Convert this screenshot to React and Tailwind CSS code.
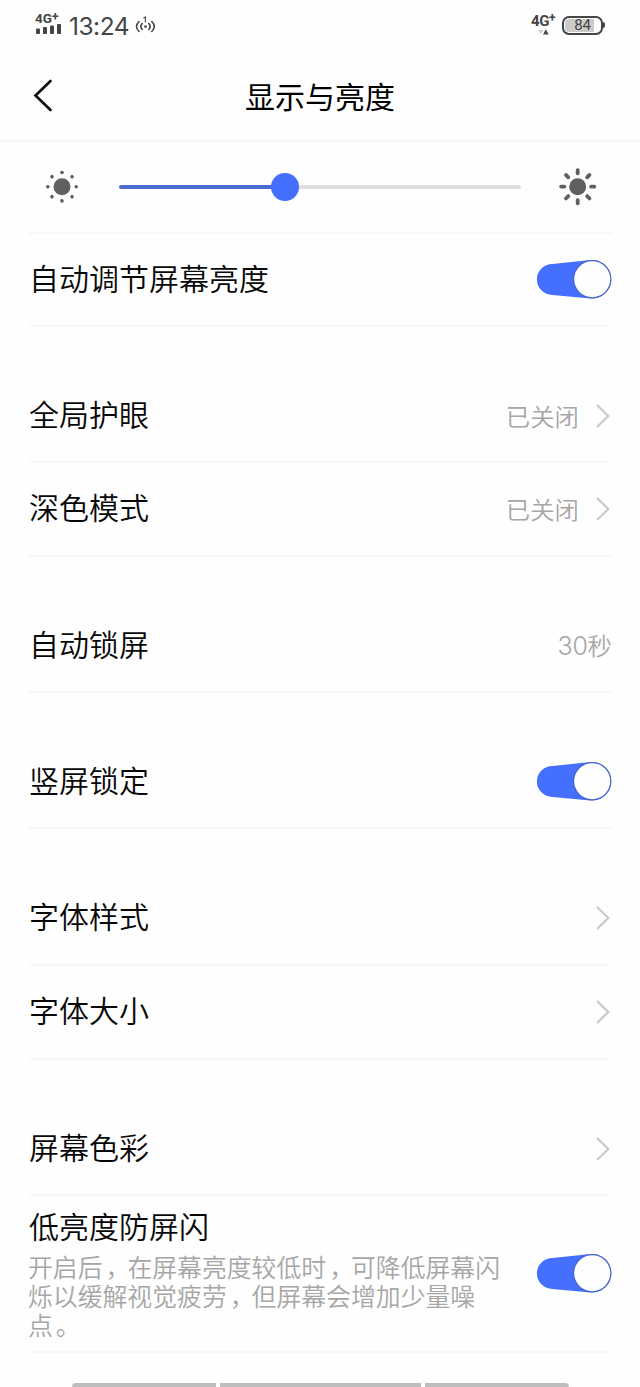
import React from "react";

function Toggle() {
  return (
    <button role="switch" aria-checked="true" className="block h-10 w-[76px] shrink-0">
      <svg viewBox="0 0 76 40" className="block h-10 w-[76px]">
        <path d="M16.4 3.9 L54.5 0 A19.3 19.3 0 1 1 54.5 38.5 L16.4 34.9 A15.5 15.5 0 0 1 16.4 3.9Z" fill="#456fff" />
        <circle cx="56.2" cy="19.2" r="18.7" fill="none" stroke="#4a66bd" strokeWidth="1.1" />
        <circle cx="56.2" cy="19.2" r="18" fill="#fefefe" />
      </svg>
    </button>
  );
}

function Chevron() {
  return (
    <svg viewBox="0 0 16 26" className="block h-[26px] w-4 shrink-0">
      <path d="M1 2 L12.3 13 L1 24" fill="none" stroke="#c9c9c9" strokeWidth="2.1" />
    </svg>
  );
}

function Row({ label, className, children }) {
  return (
    <div className={"mx-7 flex items-center justify-between border-b-2 border-[#f8f8f8] " + className}>
      <span className="ml-px pb-[6px] text-[30px] leading-[44px]">{label}</span>
      <div className="flex items-center">{children}</div>
    </div>
  );
}

function Value({ children }) {
  return <span className="mr-[17px] text-[24.4px] leading-9 text-[#a6a6a6]">{children}</span>;
}

function Mark({ children }) {
  return <span className="relative left-[3px]">{children}</span>;
}

function Dots() {
  return (
    <svg viewBox="0 0 40 40" className="block size-10 shrink-0" fill="#606060">
      <circle cx="20" cy="19.7" r="8.5" />
      {[0, 45, 90, 135, 180, 225, 270, 315].map((a) => (
        <circle key={a} cx="20" cy="5.5" r="1.8" transform={`rotate(${a} 20 19.7)`} />
      ))}
    </svg>
  );
}

function Sun() {
  return (
    <svg viewBox="0 0 40 40" className="block size-10 shrink-0" fill="#606060">
      <circle cx="19.7" cy="19.7" r="8.5" />
      {[0, 45, 90, 135, 180, 225, 270, 315].map((a) => (
        <rect key={a} x="17.8" y="1.2" width="3.8" height="7" rx="1.8" transform={`rotate(${a} 19.7 19.7)`} />
      ))}
    </svg>
  );
}

function StatusBar() {
  return (
    <div className="flex h-[50px] items-start justify-between pl-[35px] pr-[35px] font-['Roboto','Liberation_Sans',sans-serif] text-[#454545]">
      <div className="flex">
        <div className="w-[27px] pt-[11px]">
          <div className="flex text-[13.5px] font-bold leading-[14px]">
            4G<span className="-mt-px text-[12px]">+</span>
          </div>
          <svg viewBox="0 0 27 12" className="-mt-px block h-3 w-[27px]" fill="#454545">
            <rect x="1" y="4.5" width="4" height="5.5" rx="1" />
            <rect x="8" y="3" width="4" height="7" rx="1" />
            <rect x="15" y="1.5" width="4" height="8.5" rx="1" />
            <rect x="22" y="0" width="4" height="10" rx="1" />
          </svg>
        </div>
        <span className="ml-[7px] mt-[11px] w-[60px] font-['Inter','Roboto',sans-serif] text-[24.5px] font-normal leading-[30px] tracking-[-0.5px]">13:24</span>
        <svg viewBox="0 0 22 18" className="ml-[6px] mt-[16px] block h-[18px] w-[22px]" fill="none" stroke="#454545" strokeWidth="1.6" strokeLinecap="round">
          <path d="M4 5.5 Q-1 10.5 4 15.5 M7.2 7.5 Q4.5 10.5 7.2 13.5 M16.8 5.5 Q21.8 10.5 16.8 15.5 M13.8 7.5 Q16.5 10.5 13.8 13.5" />
          <path d="M8.8 2 L10.4 1 V6" strokeWidth="1.1" />
          <circle cx="10.5" cy="10.6" r="1.3" fill="#454545" stroke="none" />
        </svg>
      </div>
      <div className="flex">
        <div className="w-[26px] pt-[13px]">
          <div className="flex text-[15px] font-bold leading-[16px] tracking-[-0.4px]">
            4G<span className="-mt-[3px] text-[12px]">+</span>
          </div>
          <svg viewBox="0 0 26 6" className="block h-1.5 w-[26px]">
            <path d="M7 1 H12.5 L9.7 5Z" fill="#cfcfcf" />
            <path d="M12 5.5 H17.7 L14.8 0.3Z" fill="#454545" />
          </svg>
        </div>
        <div className="ml-[5px] mt-[15px] flex items-center">
          <div className="flex h-[19px] w-[41px] rounded-[7px] border-2 border-[#454545] p-px">
            <div className="flex h-full w-[29px] items-center justify-end rounded-l-[4px] bg-[#cbcbcb] pr-[3px] text-[15px] font-normal leading-none">84</div>
          </div>
          <div className="h-[6px] w-[2px] rounded-r-sm bg-[#454545]" />
        </div>
      </div>
    </div>
  );
}

export default function App() {
  return (
    <main className="flex h-[1387px] w-[640px] flex-col overflow-hidden bg-[#fefefe] font-['Noto_Sans_CJK_SC',sans-serif] font-[350] text-[#080808]">
      <StatusBar />
      <header className="grid h-[92px] shrink-0 grid-cols-[1fr_auto_1fr] items-center border-b-2 border-[#f7f7f7]">
        <svg viewBox="0 0 20 34" className="ml-[33px] block h-[34px] w-5" fill="none" stroke="#111" strokeWidth="2.7" strokeLinecap="round">
          <path d="M17.5 3 L2.5 17.5 L17.5 32" />
        </svg>
        <h1 className="pb-px text-[30px] font-normal leading-[44px] text-black">显示与亮度</h1>
      </header>
      <div className="mx-7 flex h-[92px] shrink-0 items-center border-b-2 border-[#f8f8f8] pl-[14px] pr-[14px]">
        <Dots />
        <div className="ml-[37px] flex h-7 w-[402px] items-center">
          <div className="h-1 w-[153px] rounded-l-full bg-[#4a6ccc]" />
          <div className="-ml-[1.5px] size-7 rounded-full bg-[#456fff]" />
          <div className="h-1 flex-1 rounded-r-full bg-[#dfdfdf]" />
        </div>
        <div className="ml-auto"><Sun /></div>
      </div>
      <Row label="自动调节屏幕亮度" className="h-[93px] shrink-0"><Toggle /></Row>
      <Row label="全局护眼" className="mt-[43px] h-[93px] shrink-0"><Value>已关闭</Value><Chevron /></Row>
      <Row label="深色模式" className="h-[94px] shrink-0"><Value>已关闭</Value><Chevron /></Row>
      <Row label="自动锁屏" className="mt-[43px] h-[93px] shrink-0">
        <span className="text-[24.4px] leading-9 text-[#a6a6a6]"><span className="font-['Inter',sans-serif] text-[25px] font-light tracking-[-0.3px]">30</span>秒</span>
      </Row>
      <Row label="竖屏锁定" className="mt-[43px] h-[93px] shrink-0"><Toggle /></Row>
      <Row label="字体样式" className="mt-[43px] h-[94px] shrink-0"><Chevron /></Row>
      <Row label="字体大小" className="h-[94px] shrink-0"><Chevron /></Row>
      <Row label="屏幕色彩" className="mt-[43px] h-[93px] shrink-0"><Chevron /></Row>
      <section className="mx-7 flex h-[157px] shrink-0 items-center justify-between border-b-2 border-[#f8f8f8]">
        <div className="w-[480px] pb-[5px]">
          <h2 className="mb-[5px] ml-px text-[30px] leading-[44px]">低亮度防屏闪</h2>
          <p className="text-[24.85px] leading-[29px] text-[#a6a6a6]">
            开启后<Mark>，</Mark>在屏幕亮度较低时<Mark>，</Mark>可降低屏幕闪<br />烁以缓解视觉疲劳<Mark>，</Mark>但屏幕会增加少量噪<br />点<Mark>。</Mark>
          </p>
        </div>
        <Toggle />
      </section>
      <nav className="mx-auto mt-auto flex h-1 w-[497px] shrink-0 gap-1">
        <div className="w-[144px] rounded-tl-sm bg-[#bdbdbd]" />
        <div className="flex-1 bg-[#bdbdbd]" />
        <div className="w-[144px] rounded-tr-sm bg-[#bdbdbd]" />
      </nav>
    </main>
  );
}
